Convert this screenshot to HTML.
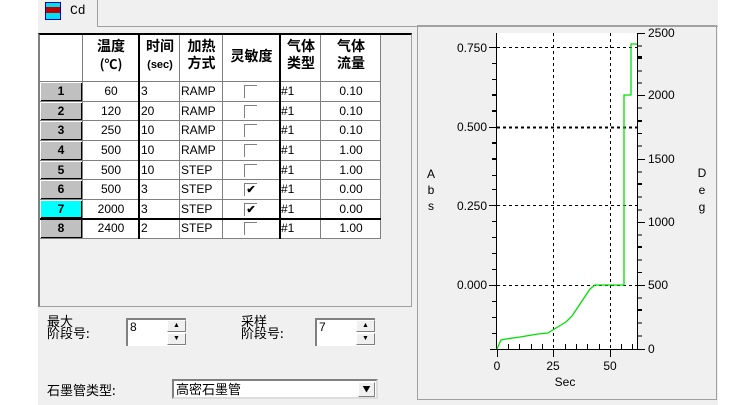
<!DOCTYPE html>
<html><head><meta charset="utf-8"><style>
*{margin:0;padding:0;box-sizing:border-box}
body{width:756px;height:405px;background:#fff;position:relative;overflow:hidden;font-family:"Liberation Sans","Noto Sans CJK SC",sans-serif;font-size:12px;color:#000}
.a{position:absolute}
.c{position:absolute;text-align:center;line-height:19px;font-size:12px}
.cj{font-family:"Noto Sans CJK SC","WenQuanYi Zen Hei",sans-serif}
.rh{position:absolute;background:#c0c0c0;font-weight:bold;text-align:center;line-height:17px;border-right:1px solid #000;border-bottom:1px solid #000}
.cb{position:absolute;width:13px;height:13px;border-top:1px solid #808080;border-left:1px solid #808080;background:#fff;font-size:11px;line-height:12px;text-align:center;font-weight:bold}
.spin{position:absolute;width:60px;height:28px;background:#fff;border-top:2px solid #808080;border-left:2px solid #808080;font-size:12px;padding-left:2px}
.sb{position:absolute;right:0;width:19px;height:12px;background:#f0f0f0;border:1px solid #808080;border-top-color:#fff;border-left-color:#fff;font-size:7px;text-align:center;line-height:10px}
</style></head><body>
<div class="a" style="left:38px;top:0;width:680px;height:405px;background:#f0f0f0"></div>
<div class="a" style="left:38px;top:0;width:60px;height:27px;border-right:1px solid #a0a0a0"></div>
<div class="a" style="left:98px;top:26px;width:620px;height:1px;background:#a0a0a0"></div>
<div class="a" style="left:45px;top:2px;width:16px;height:18px;background:#00e0f0;border:1px solid #0000c0"></div>
<div class="a" style="left:46px;top:7px;width:14px;height:6px;background:#c00000"></div>
<div class="a" style="left:70px;top:3px;font-family:'Liberation Mono',monospace;font-size:13px">Cd</div>
<div class="a" style="left:38px;top:33px;width:374px;height:274px;border:1px solid #a0a0a0;border-top:2px solid #000;border-left:2px solid #808080"></div>
<div class="a" style="left:40px;top:35px;width:341px;height:204px;background:#fff"></div>
<svg class="a" style="left:0;top:0" width="420" height="250">
<g stroke="#808080" stroke-width="1">
<line x1="40" y1="81.5" x2="381" y2="81.5"/>
<line x1="40" y1="101.5" x2="381" y2="101.5"/><line x1="40" y1="120.5" x2="381" y2="120.5"/>
<line x1="40" y1="140.5" x2="381" y2="140.5"/><line x1="40" y1="160.5" x2="381" y2="160.5"/>
<line x1="40" y1="179.5" x2="381" y2="179.5"/><line x1="40" y1="199.5" x2="381" y2="199.5"/>
<line x1="40" y1="238.5" x2="381" y2="238.5"/>
<line x1="82.5" y1="35" x2="82.5" y2="239"/><line x1="179.5" y1="35" x2="179.5" y2="239"/>
<line x1="222.5" y1="35" x2="222.5" y2="239"/><line x1="320.5" y1="35" x2="320.5" y2="239"/>
<line x1="380.5" y1="35" x2="380.5" y2="239"/>
</g>
<g stroke="#000" stroke-width="2">
<line x1="139" y1="35" x2="139" y2="239"/><line x1="280" y1="35" x2="280" y2="239"/>
<line x1="40" y1="219" x2="381" y2="219"/>
</g>
</svg>
<div class="c cj" style="left:83px;top:38px;width:56px;line-height:17px;font-weight:bold;font-size:14px">温度<br><span style="font-size:13px">(℃)</span></div>
<div class="c cj" style="left:140px;top:38px;width:40px;line-height:17px;font-weight:bold;font-size:14px">时间<br><span style="font-size:11px;font-family:'Liberation Sans',sans-serif">(sec)</span></div>
<div class="c cj" style="left:180px;top:38px;width:43px;line-height:17px;font-weight:bold;font-size:14px">加热<br>方式</div>
<div class="c cj" style="left:223px;top:48px;width:57px;line-height:17px;font-weight:bold;font-size:14px">灵敏度</div>
<div class="c cj" style="left:281px;top:38px;width:40px;line-height:17px;font-weight:bold;font-size:14px">气体<br>类型</div>
<div class="c cj" style="left:321px;top:38px;width:60px;line-height:17px;font-weight:bold;font-size:14px">气体<br>流量</div>

<div class="rh" style="left:41px;top:83px;width:41px;height:18px">1</div>
<div class="rh" style="left:41px;top:103px;width:41px;height:17px">2</div>
<div class="rh" style="left:41px;top:122px;width:41px;height:18px">3</div>
<div class="rh" style="left:41px;top:142px;width:41px;height:18px">4</div>
<div class="rh" style="left:41px;top:162px;width:41px;height:17px">5</div>
<div class="rh" style="left:41px;top:181px;width:41px;height:18px">6</div>
<div class="rh" style="left:41px;top:201px;width:41px;height:17px;background:#00ffff">7</div>
<div class="rh" style="left:41px;top:220px;width:41px;height:18px">8</div>

<div class="a" style="left:0;top:82px">
<div class="c" style="left:83px;top:0;width:56px">60</div><div class="c" style="left:141px;top:0">3</div><div class="c" style="left:181px;top:0">RAMP</div><div class="cb" style="left:244px;top:3px"></div><div class="c" style="left:281px;top:0">#1</div><div class="c" style="left:321px;top:0;width:60px">0.10</div>
<div class="c" style="left:83px;top:20px;width:56px">120</div><div class="c" style="left:141px;top:20px">20</div><div class="c" style="left:181px;top:20px">RAMP</div><div class="cb" style="left:244px;top:23px"></div><div class="c" style="left:281px;top:20px">#1</div><div class="c" style="left:321px;top:20px;width:60px">0.10</div>
<div class="c" style="left:83px;top:39px;width:56px">250</div><div class="c" style="left:141px;top:39px">10</div><div class="c" style="left:181px;top:39px">RAMP</div><div class="cb" style="left:244px;top:42px"></div><div class="c" style="left:281px;top:39px">#1</div><div class="c" style="left:321px;top:39px;width:60px">0.10</div>
<div class="c" style="left:83px;top:59px;width:56px">500</div><div class="c" style="left:141px;top:59px">10</div><div class="c" style="left:181px;top:59px">RAMP</div><div class="cb" style="left:244px;top:62px"></div><div class="c" style="left:281px;top:59px">#1</div><div class="c" style="left:321px;top:59px;width:60px">1.00</div>
<div class="c" style="left:83px;top:79px;width:56px">500</div><div class="c" style="left:141px;top:79px">10</div><div class="c" style="left:181px;top:79px">STEP</div><div class="cb" style="left:244px;top:82px"></div><div class="c" style="left:281px;top:79px">#1</div><div class="c" style="left:321px;top:79px;width:60px">1.00</div>
<div class="c" style="left:83px;top:98px;width:56px">500</div><div class="c" style="left:141px;top:98px">3</div><div class="c" style="left:181px;top:98px">STEP</div><div class="cb" style="left:244px;top:101px">✔</div><div class="c" style="left:281px;top:98px">#1</div><div class="c" style="left:321px;top:98px;width:60px">0.00</div>
<div class="c" style="left:83px;top:118px;width:56px">2000</div><div class="c" style="left:141px;top:118px">3</div><div class="c" style="left:181px;top:118px">STEP</div><div class="cb" style="left:244px;top:121px">✔</div><div class="c" style="left:281px;top:118px">#1</div><div class="c" style="left:321px;top:118px;width:60px">0.00</div>
<div class="c" style="left:83px;top:137px;width:56px">2400</div><div class="c" style="left:141px;top:137px">2</div><div class="c" style="left:181px;top:137px">STEP</div><div class="cb" style="left:244px;top:140px"></div><div class="c" style="left:281px;top:137px">#1</div><div class="c" style="left:321px;top:137px;width:60px">1.00</div>
</div>

<div class="a cj" style="left:47px;top:315px;font-size:13px;line-height:12px">最大<br>阶段号:</div>
<div class="spin" style="left:126px;top:318px">8<div class="sb" style="top:0">▲</div><div class="sb" style="top:13px">▼</div></div>
<div class="a cj" style="left:241px;top:315px;font-size:13px;line-height:12px">采样<br>阶段号:</div>
<div class="spin" style="left:315px;top:318px">7<div class="sb" style="top:0">▲</div><div class="sb" style="top:13px">▼</div></div>
<div class="a cj" style="left:47px;top:380px;font-size:13px">石墨管类型:</div>
<div class="a cj" style="left:172px;top:379px;width:206px;height:20px;background:#fff;border:2px solid #808080;border-right-color:#ddd;border-bottom-color:#ddd;font-size:13px;line-height:16px;padding-left:2px">高密石墨管
<div class="a" style="right:1px;top:1px;width:17px;height:15px;background:#f0f0f0;border:1px solid #808080;border-top-color:#fff;border-left-color:#fff;font-size:8px;text-align:center;line-height:13px">▼</div></div>

<div class="a" style="left:417px;top:25px;width:300px;height:375px;border:1px solid #a0a0a0"></div>
<svg class="a" style="left:0;top:0" width="756" height="405" font-family="Liberation Sans,sans-serif" font-size="12">
<rect x="497" y="33" width="140" height="316" fill="#fff"/>
<g stroke="#000" stroke-dasharray="3,3" stroke-width="1">
<line x1="497" y1="47.5" x2="637" y2="47.5"/><line x1="497" y1="127.5" x2="637" y2="127.5" stroke-width="2"/>
<line x1="497" y1="205.5" x2="637" y2="205.5"/><line x1="497" y1="285.5" x2="637" y2="285.5"/>
<line x1="553.5" y1="33" x2="553.5" y2="349"/><line x1="610.5" y1="33" x2="610.5" y2="349"/>
</g>
<g stroke="#000">
<line x1="496.5" y1="33" x2="496.5" y2="349"/><line x1="637.5" y1="33" x2="637.5" y2="349"/>
<line x1="490" y1="349.5" x2="645" y2="349.5"/>
<line x1="489" y1="47.5" x2="497" y2="47.5"/><line x1="489" y1="127.5" x2="497" y2="127.5"/><line x1="489" y1="205.5" x2="497" y2="205.5"/><line x1="489" y1="285.5" x2="497" y2="285.5"/>
<path d="M492 63.5h5M492 79.5h5M492 111.5h5M492 143.5h5M492 159.5h5M492 175.5h5M492 189.5h5M492 221.5h5M492 237.5h5M492 253.5h5M492 269.5h5M492 301.5h5M492 317.5h5M492 333.5h5" stroke-width="1"/>
<path d="M492 95h5M492 111h5M492 143h5M492 159h5" stroke-width="2"/>
<path d="M637 33.5h8M637 95.5h8M637 159.5h8M637 222.5h8M637 285.5h8M637 349.5h8"/>
<path d="M637 46h5M637 58.5h5M637 71h5M637 83h5M637 108h5M637 121h5M637 133.5h5M637 146h5M637 172h5M637 184.5h5M637 197h5M637 210h5M637 235h5M637 247.5h5M637 260h5M637 272.5h5M637 298h5M637 310.5h5M637 323h5M637 336h5"/>
<path d="M637 57h5M637 121h5M637 184h5M637 247h5M637 310h5" stroke-width="2"/>
<path d="M497.5 349v8M553.5 349v8M610.5 349v8M508.5 349v-5M519.5 349v-5M531.5 349v-5M542.5 349v-5M565.5 349v-5M576.5 349v-5M587.5 349v-5M599.5 349v-5M621.5 349v-5M632.5 349v-5"/>
</g>
<polyline fill="none" stroke="#00e000" stroke-width="1.3" points="497,349 501,340 506,339 520,337 538,334 548,333 556,328 566,322 572,316 578,307 584,298 590,289 595,285 624,285 624,95 631,95 631,44 637,44"/>
<g fill="#000">
<text x="487" y="52" text-anchor="end">0.750</text><text x="487" y="131" text-anchor="end">0.500</text>
<text x="487" y="210" text-anchor="end">0.250</text><text x="487" y="289" text-anchor="end">0.000</text>
<text x="648" y="37">2500</text><text x="648" y="99">2000</text><text x="648" y="163">1500</text>
<text x="648" y="226">1000</text><text x="648" y="289">500</text><text x="648" y="353">0</text>
<text x="497" y="370" text-anchor="middle">0</text><text x="553" y="370" text-anchor="middle">25</text><text x="610" y="370" text-anchor="middle">50</text>
<text x="565" y="386" text-anchor="middle">Sec</text>
<text x="431" y="178" text-anchor="middle">A</text><text x="431" y="194" text-anchor="middle">b</text><text x="431" y="210" text-anchor="middle">s</text>
<text x="702" y="177" text-anchor="middle">D</text><text x="702" y="194" text-anchor="middle">e</text><text x="702" y="211" text-anchor="middle">g</text>
</g>
</svg>
</body></html>
